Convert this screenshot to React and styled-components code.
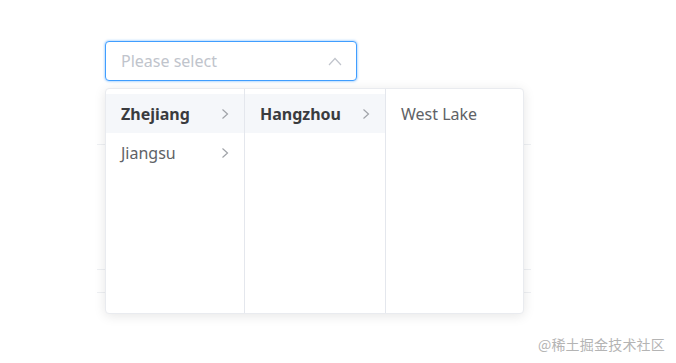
import React from "react";
import styled, { createGlobalStyle } from "styled-components";

const Global = createGlobalStyle`
  html, body { margin: 0; padding: 0; background: #fff; }
  body { font-family: "Noto Sans", "Open Sans", "Liberation Sans", sans-serif; }
  * { box-sizing: border-box; }
`;

const Page = styled.div`
  width: 676px;
  height: 363px;
  overflow: hidden;
  display: flex;
  flex-direction: column;
  padding: 41px 11px 9px 0;
`;

const Cascader = styled.div`
  position: relative;
  width: 252px;
  margin-left: 105px;
  z-index: 2;
`;

const Input = styled.div`
  height: 40px;
  border: 1px solid #409eff;
  border-radius: 4px;
  box-shadow: 0 0 2px 1px rgba(64, 158, 255, 0.35);
  display: flex;
  align-items: center;
  justify-content: space-between;
  padding: 0 14px 0 15px;
  background: #fff;
`;

const Placeholder = styled.span`
  font-size: 16px;
  color: #c0c4cc;
`;

const Table = styled.div`
  width: 434px;
  margin-left: 97px;
  display: flex;
  flex-direction: column;
`;

const Row = styled.div`
  height: ${(p) => p.$h}px;
  border-bottom: 1px solid #eef0f3;
`;

const Panel = styled.div`
  position: absolute;
  top: 47px;
  left: 0;
  display: flex;
  height: 226px;
  background: #fff;
  border: 1px solid #e9ebef;
  border-radius: 4px;
  box-shadow: 0 2px 12px rgba(0, 0, 0, 0.1);
`;

const Menu = styled.ul`
  list-style: none;
  margin: 0;
  padding: 5px 0;
  width: ${(p) => p.$w}px;
  border-right: ${(p) => (p.$last ? "none" : "1px solid #e4e7ed")};
`;

const Item = styled.li`
  height: 39px;
  display: flex;
  align-items: center;
  justify-content: space-between;
  padding: 0 15px;
  font-size: 16px;
  color: ${(p) => (p.$active ? "#3a3b3e" : "#606266")};
  font-weight: ${(p) => (p.$active ? 700 : 400)};
  background: ${(p) => (p.$active ? "#f5f7fa" : "transparent")};
`;

const Watermark = styled.div`
  margin-top: auto;
  align-self: flex-end;
  font-size: 14px;
  line-height: 20px;
  color: #b4b4b4;
  font-family: "Noto Sans CJK SC", "Noto Sans", sans-serif;
  letter-spacing: 0.2px;
`;

const Chevron = ({ dir = "right" }) =>
  dir === "right" ? (
    <svg width="8" height="12" viewBox="0 0 8 12" fill="none">
      <path d="M1.5 1.5L6.5 6L1.5 10.5" stroke="#a0a3a8" strokeWidth="1.2" />
    </svg>
  ) : (
    <svg width="14" height="9" viewBox="0 0 14 9" fill="none">
      <path d="M1 8L7 1.5L13 8" stroke="#c0c4cc" strokeWidth="1.2" />
    </svg>
  );

const menus = [
  { w: 139, items: [{ label: "Zhejiang", active: true, arrow: true }, { label: "Jiangsu", arrow: true }] },
  { w: 141, items: [{ label: "Hangzhou", active: true, arrow: true }] },
  { w: 137, items: [{ label: "West Lake" }] },
];

export default function App() {
  return (
    <>
      <Global />
      <Page>
        <Cascader>
          <Input>
            <Placeholder>Please select</Placeholder>
            <Chevron dir="up" />
          </Input>
          <Panel>
            {menus.map((m, i) => (
              <Menu key={i} $w={m.w} $last={i === menus.length - 1}>
                {m.items.map((it) => (
                  <Item key={it.label} $active={it.active}>
                    <span>{it.label}</span>
                    {it.arrow && <Chevron />}
                  </Item>
                ))}
              </Menu>
            ))}
          </Panel>
        </Cascader>
        <Table>
          <Row $h={64} />
          <Row $h={125} />
          <Row $h={23} />
        </Table>
        <Watermark>@稀土掘金技术社区</Watermark>
      </Page>
    </>
  );
}
